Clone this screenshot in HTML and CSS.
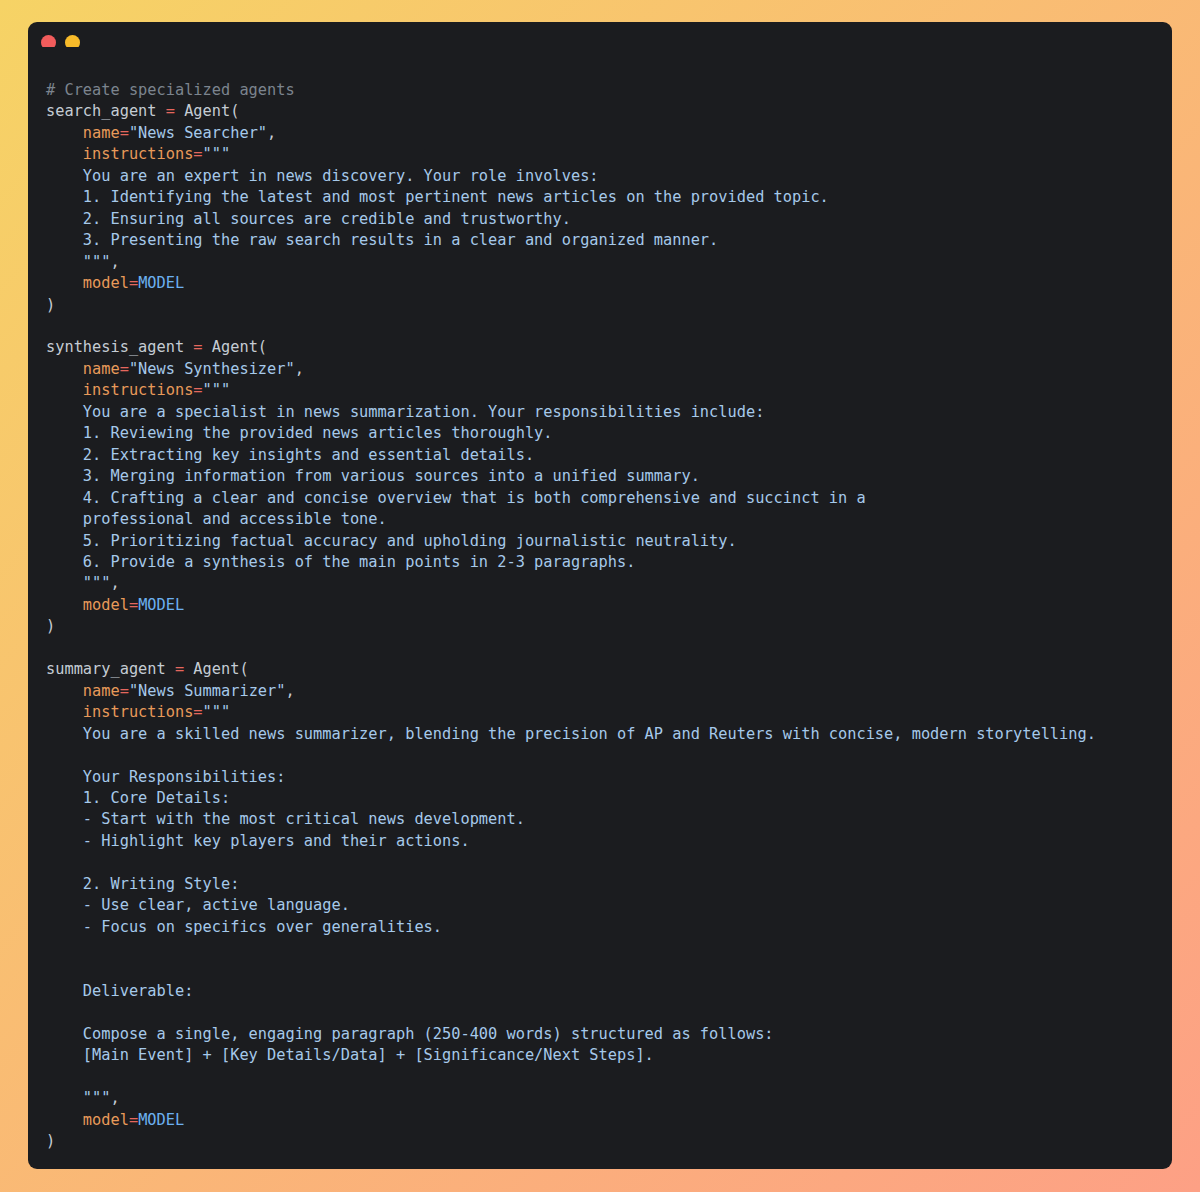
FILE: index.html
```html
<!DOCTYPE html>
<html>
<head>
<meta charset="utf-8">
<link rel="stylesheet" href="styles.css">
</head>
<body>
<div class="window">
  <div class="dots"><span class="dot red"></span><span class="dot yellow"></span></div>
<pre class="code"><span class="c"># Create specialized agents</span>
search_agent <span class="o">=</span> Agent(
    <span class="k">name</span><span class="o">=</span><span class="s">"News Searcher"</span>,
    <span class="k">instructions</span><span class="o">=</span><span class="s">"""
    You are an expert in news discovery. Your role involves:
    1. Identifying the latest and most pertinent news articles on the provided topic.
    2. Ensuring all sources are credible and trustworthy.
    3. Presenting the raw search results in a clear and organized manner.
    """</span>,
    <span class="k">model</span><span class="o">=</span><span class="m">MODEL</span>
)

synthesis_agent <span class="o">=</span> Agent(
    <span class="k">name</span><span class="o">=</span><span class="s">"News Synthesizer"</span>,
    <span class="k">instructions</span><span class="o">=</span><span class="s">"""
    You are a specialist in news summarization. Your responsibilities include:
    1. Reviewing the provided news articles thoroughly.
    2. Extracting key insights and essential details.
    3. Merging information from various sources into a unified summary.
    4. Crafting a clear and concise overview that is both comprehensive and succinct in a
    professional and accessible tone.
    5. Prioritizing factual accuracy and upholding journalistic neutrality.
    6. Provide a synthesis of the main points in 2-3 paragraphs.
    """</span>,
    <span class="k">model</span><span class="o">=</span><span class="m">MODEL</span>
)

summary_agent <span class="o">=</span> Agent(
    <span class="k">name</span><span class="o">=</span><span class="s">"News Summarizer"</span>,
    <span class="k">instructions</span><span class="o">=</span><span class="s">"""
    You are a skilled news summarizer, blending the precision of AP and Reuters with concise, modern storytelling.

    Your Responsibilities:
    1. Core Details:
    - Start with the most critical news development.
    - Highlight key players and their actions.

    2. Writing Style:
    - Use clear, active language.
    - Focus on specifics over generalities.


    Deliverable:

    Compose a single, engaging paragraph (250-400 words) structured as follows:
    [Main Event] + [Key Details/Data] + [Significance/Next Steps].

    """</span>,
    <span class="k">model</span><span class="o">=</span><span class="m">MODEL</span>
)</pre>
</div>
</body>
</html>
```

FILE: styles.css
```css
html, body {
  margin: 0;
  padding: 0;
}
body {
  width: 1200px;
  height: 1192px;
  box-sizing: border-box;
  padding: 22px 28px 23px 28px;
  background: linear-gradient(135deg, #f6d365 0%, #fda085 100%);
}
.window {
  height: 100%;
  box-sizing: border-box;
  background: #1b1c1f;
  border-radius: 9px;
  padding: 13px 18px 0 18px;
}
.dots {
  display: flex;
  gap: 9px;
  height: 12px;
  overflow: hidden;
  margin-left: -5px;
}
.dot {
  width: 15px;
  height: 15px;
  border-radius: 50%;
  flex: none;
}
.red { background: #f25c5c; }
.yellow { background: #f8bb2a; }
.code {
  margin: 33px 0 0 0;
  font-family: "DejaVu Sans Mono", "Liberation Mono", monospace;
  font-size: 15.3px;
  line-height: 21.45px;
  color: #c5ccd4;
  white-space: pre;
}
.c { color: #7c848e; }
.o { color: #e5675e; }
.k { color: #e89a5a; }
.s { color: #a6c9ea; }
.m { color: #6cb0f0; }
```
